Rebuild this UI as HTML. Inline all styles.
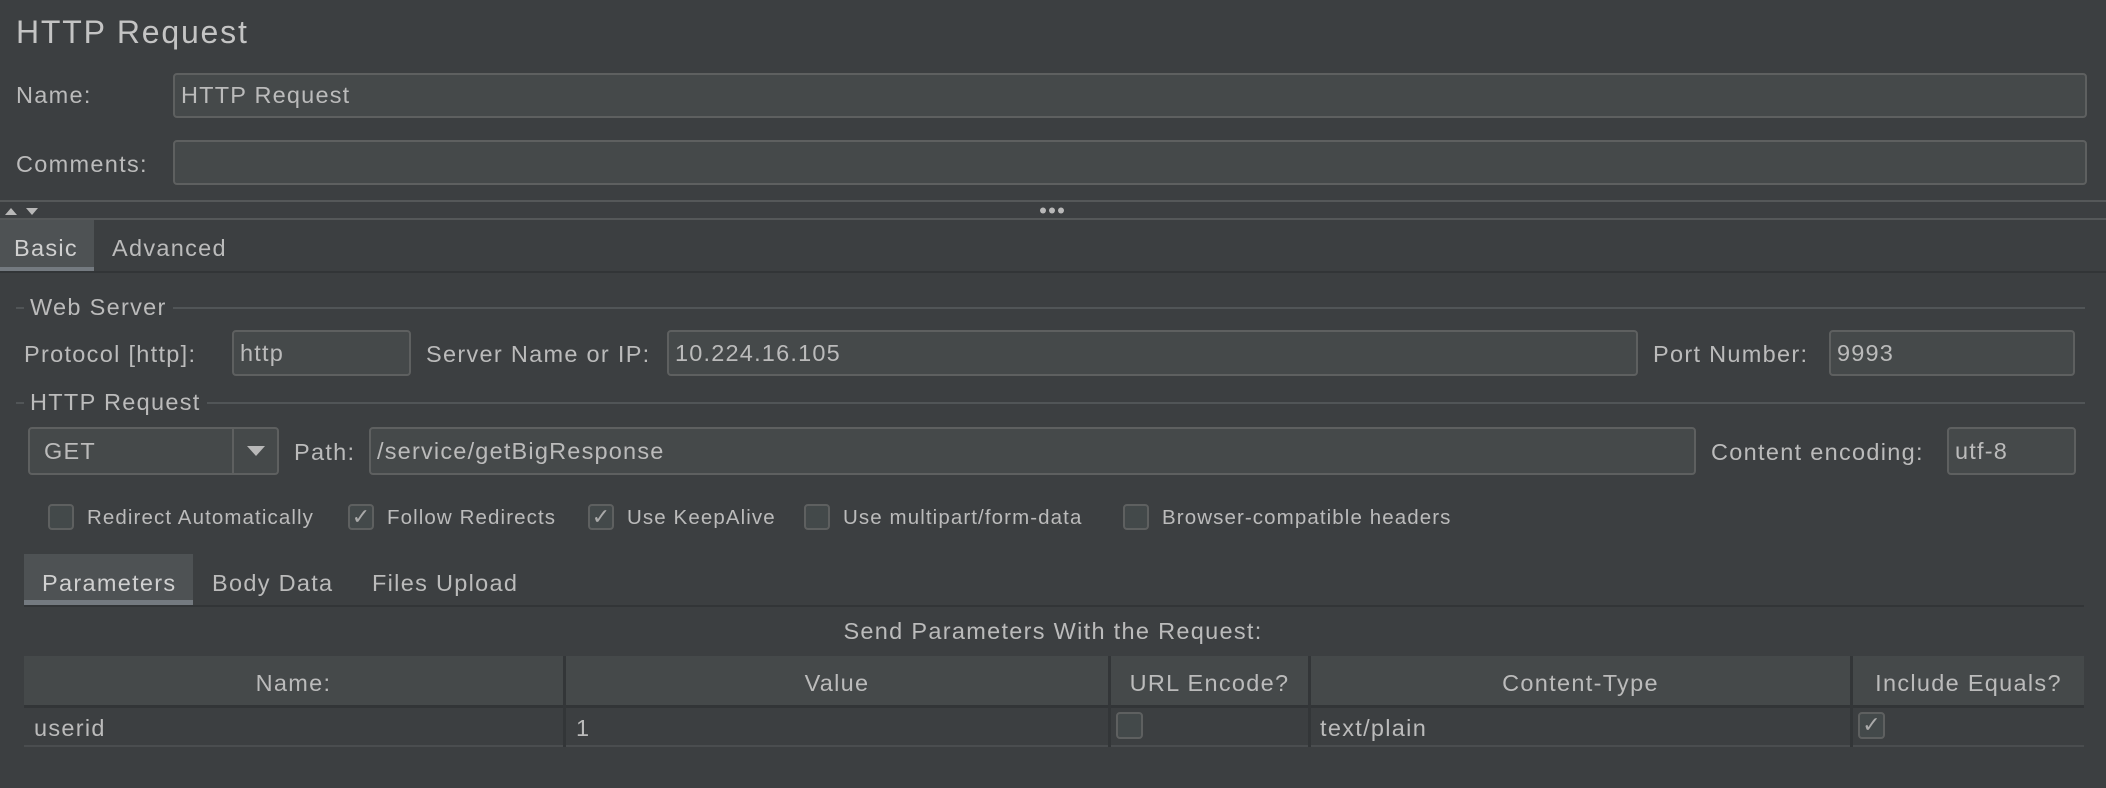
<!DOCTYPE html>
<html><head><style>
*{box-sizing:border-box;margin:0;padding:0}
body{width:2106px;height:788px;background:#3c3f41;color:#bbbbbb;font-family:"Liberation Sans",sans-serif;position:relative;overflow:hidden}
.a{position:absolute;white-space:nowrap}
.f{position:absolute;background:#45494a;border:2px solid #5e6060;border-radius:4px;font-size:23.5px;letter-spacing:1.2px;padding-left:6px;display:flex;align-items:center;color:#bbbbbb}
.l{font-size:23.5px;letter-spacing:1.3px}
.cb{position:absolute;width:26px;height:26px;border:2px solid #5e6060;border-radius:4px;background:#43494a;color:#aaa;font-size:22px;line-height:22px;text-align:center}
.ct{font-size:20.5px;letter-spacing:1.1px}
.hl{position:absolute;height:2px;background:#515557}
.vl{position:absolute;width:3px;background:#333638}
</style></head><body>
<div class="a" style="left:16px;top:14px;font-size:32px;letter-spacing:1.8px;color:#c4c4c4">HTTP Request</div>
<div class="a l" style="left:16px;top:82px">Name:</div>
<div class="f" style="left:173px;top:73px;width:1914px;height:45px">HTTP Request</div>
<div class="a l" style="left:16px;top:151px">Comments:</div>
<div class="f" style="left:173px;top:140px;width:1914px;height:45px"></div>
<div class="hl" style="left:0;top:200px;width:2106px;background:#555859"></div>
<div class="hl" style="left:0;top:218px;width:2106px;background:#555859"></div>
<svg class="a" style="left:4px;top:205px" width="42" height="12"><path d="M1 10L7 3L13 10Z M22 3L34 3L28 10Z" fill="#b8b8b8"/></svg>
<svg class="a" style="left:1036px;top:205px" width="34" height="12"><circle cx="7" cy="5.5" r="3" fill="#b8b8b8"/><circle cx="16" cy="5.5" r="3" fill="#b8b8b8"/><circle cx="25" cy="5.5" r="3" fill="#b8b8b8"/></svg>
<div class="a" style="left:0;top:220px;width:94px;height:51px;background:#4e5254"></div>
<div class="a" style="left:0;top:267px;width:94px;height:4px;background:#747a80"></div>
<div class="hl" style="left:0;top:271px;width:2106px;background:#323537;height:2px"></div>
<div class="a l" style="left:14px;top:235px;color:#d0d0d0">Basic</div>
<div class="a l" style="left:112px;top:235px">Advanced</div>
<div class="hl" style="left:16px;top:307px;width:2069px"></div>
<div class="a l" style="left:24px;top:294px;background:#3c3f41;padding:0 6px">Web Server</div>
<div class="a l" style="left:24px;top:341px">Protocol [http]:</div>
<div class="f" style="left:232px;top:330px;width:179px;height:46px">http</div>
<div class="a l" style="left:426px;top:341px">Server Name or IP:</div>
<div class="f" style="left:667px;top:330px;width:971px;height:46px">10.224.16.105</div>
<div class="a l" style="left:1653px;top:341px">Port Number:</div>
<div class="f" style="left:1829px;top:330px;width:246px;height:46px">9993</div>
<div class="hl" style="left:16px;top:402px;width:2069px"></div>
<div class="a l" style="left:24px;top:389px;background:#3c3f41;padding:0 6px">HTTP Request</div>
<div class="f" style="left:28px;top:427px;width:251px;height:48px;padding-left:14px">GET</div>
<div class="a" style="left:232px;top:429px;width:2px;height:44px;background:#5e6060"></div>
<svg class="a" style="left:245px;top:444px" width="22" height="14"><path d="M2 2L20 2L11 12Z" fill="#b8b8b8"/></svg>
<div class="a l" style="left:294px;top:439px">Path:</div>
<div class="f" style="left:369px;top:427px;width:1327px;height:48px">/service/getBigResponse</div>
<div class="a l" style="left:1711px;top:439px">Content encoding:</div>
<div class="f" style="left:1947px;top:427px;width:129px;height:48px">utf-8</div>
<div class="cb" style="left:48px;top:504px"></div><div class="a ct" style="left:87px;top:506px">Redirect Automatically</div>
<div class="cb" style="left:348px;top:504px">✓</div><div class="a ct" style="left:387px;top:506px">Follow Redirects</div>
<div class="cb" style="left:588px;top:504px">✓</div><div class="a ct" style="left:627px;top:506px">Use KeepAlive</div>
<div class="cb" style="left:804px;top:504px"></div><div class="a ct" style="left:843px;top:506px">Use multipart/form-data</div>
<div class="cb" style="left:1123px;top:504px"></div><div class="a ct" style="left:1162px;top:506px">Browser-compatible headers</div>
<div class="a" style="left:24px;top:554px;width:169px;height:52px;background:#4e5254"></div>
<div class="a" style="left:24px;top:600px;width:169px;height:6px;background:#747a80"></div>
<div class="hl" style="left:24px;top:605px;width:2060px;background:#323537"></div>
<div class="a l" style="left:42px;top:570px;color:#d0d0d0">Parameters</div>
<div class="a l" style="left:212px;top:570px">Body Data</div>
<div class="a l" style="left:372px;top:570px">Files Upload</div>
<div class="a l" style="left:0;width:2106px;text-align:center;top:618px">Send Parameters With the Request:</div>
<div class="a" style="left:24px;top:656px;width:2060px;height:51px;background:#45494a"></div>
<div class="hl" style="left:24px;top:705px;width:2060px;background:#323537;height:3px"></div>
<div class="hl" style="left:24px;top:745px;width:2060px;background:#4a4d4f"></div>
<div class="vl" style="left:563px;top:656px;height:91px"></div>
<div class="vl" style="left:1108px;top:656px;height:91px"></div>
<div class="vl" style="left:1308px;top:656px;height:91px"></div>
<div class="vl" style="left:1850px;top:656px;height:91px"></div>
<div class="a l" style="left:24px;width:539px;text-align:center;top:670px">Name:</div>
<div class="a l" style="left:566px;width:542px;text-align:center;top:670px">Value</div>
<div class="a l" style="left:1111px;width:197px;text-align:center;top:670px">URL Encode?</div>
<div class="a l" style="left:1311px;width:539px;text-align:center;top:670px">Content-Type</div>
<div class="a l" style="left:1853px;width:231px;text-align:center;top:670px">Include Equals?</div>
<div class="a l" style="left:34px;top:715px">userid</div>
<div class="a l" style="left:576px;top:715px">1</div>
<div class="cb" style="left:1116px;top:712px;width:27px;height:27px"></div>
<div class="a l" style="left:1320px;top:715px">text/plain</div>
<div class="cb" style="left:1858px;top:712px;width:27px;height:27px">✓</div>
</body></html>
